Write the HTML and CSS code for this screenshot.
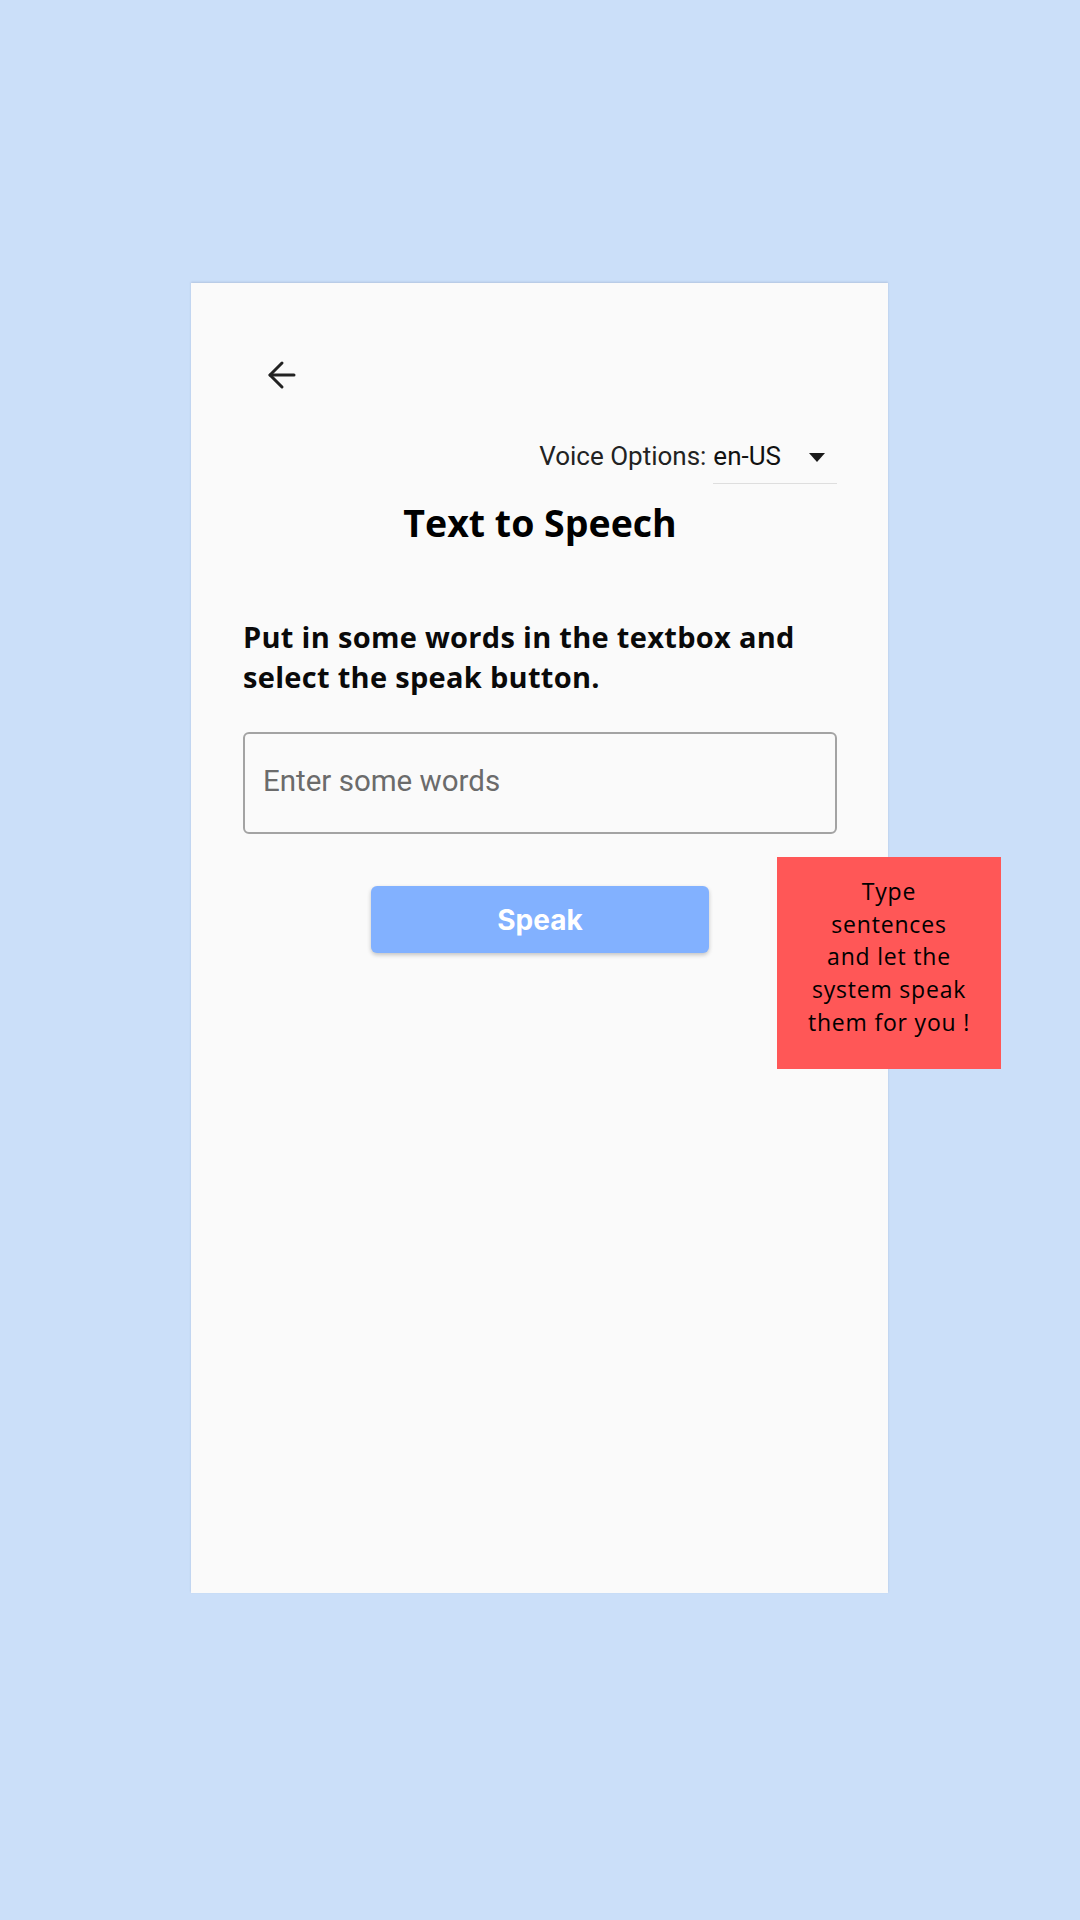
FILE: index.html
```html
<!DOCTYPE html>
<html lang="en">
<head>
<meta charset="utf-8">
<title>Text to Speech</title>
<link rel="stylesheet" href="styles.css">
</head>
<body>
<div class="stage">
  <main class="card">
    <button class="back" aria-label="Back">
      <svg viewBox="0 0 24 24" width="36" height="36" fill="none" stroke="#222" stroke-width="2" stroke-linecap="round" stroke-linejoin="round">
        <line x1="4" y1="12" x2="20" y2="12"/>
        <polyline points="12,4 4,12 12,20"/>
      </svg>
    </button>
    <div class="voice-row">
      <span class="voice-label">Voice Options:</span>
      <div class="dropdown">
        <span class="dropdown-value">en-US</span>
        <svg class="dropdown-icon" viewBox="0 0 40 48" width="40" height="48">
          <polygon points="12,21 28,21 20,30" fill="#1a1a1a"/>
        </svg>
      </div>
    </div>
    <h1 class="title">Text to Speech</h1>
    <p class="instructions">Put in some words in the textbox and select the speak button.</p>
    <div class="input-box">
      <span class="placeholder">Enter some words</span>
    </div>
    <div class="actions">
      <button class="speak">Speak</button>
    </div>
  </main>
  <aside class="note">Type<br>sentences<br>and let the<br>system speak<br>them for you !</aside>
</div>
</body>
</html>
```

FILE: styles.css
```css
html, body {
  margin: 0;
  padding: 0;
}
body {
  background: #cbdff9;
  width: 1080px;
  height: 1920px;
  overflow: hidden;
}
.stage {
  position: relative;
  padding: 283px 0 0 191px;
}
.card {
  box-sizing: border-box;
  width: 697px;
  height: 1310px;
  background: #fafafa;
  padding: 0 51px 0 52px;
  box-shadow: 0 -1px 2px rgba(60, 80, 110, 0.18);
  display: flex;
  flex-direction: column;
}
.back {
  margin: 74px 0 0 21px;
  padding: 0;
  width: 36px;
  height: 36px;
  border: 0;
  background: none;
  display: block;
  align-self: flex-start;
}
.back svg {
  display: block;
}
.voice-row {
  margin-top: 39px;
  display: flex;
  justify-content: flex-end;
  align-items: flex-start;
  font-family: Roboto, "Noto Sans", sans-serif;
  font-size: 26px;
  line-height: 48px;
  color: #222;
}
.voice-label {
  margin-right: 7px;
}
.dropdown {
  display: flex;
  align-items: flex-start;
  padding-bottom: 3px;
  border-bottom: 1px solid #dedede;
  color: #111;
}
.dropdown-value {
  margin-right: 16px;
}
.dropdown-icon {
  display: block;
}
.title {
  margin: 14px 0 0;
  text-align: center;
  font-family: "Open Sans", sans-serif;
  font-weight: 700;
  font-size: 37.5px;
  line-height: 50px;
  color: #000;
}
.instructions {
  margin: 69px 0 0;
  font-family: "Open Sans", sans-serif;
  font-weight: 700;
  font-size: 29px;
  line-height: 40px;
  letter-spacing: 0.3px;
  color: #0a0a0a;
}
.input-box {
  box-sizing: border-box;
  margin-top: 35px;
  height: 102px;
  border: 2px solid #a3a3a3;
  border-radius: 6px;
  display: flex;
  align-items: center;
  padding: 0 0 4px 18px;
}
.placeholder {
  font-family: Roboto, "Noto Sans", sans-serif;
  font-size: 29.5px;
  color: #6b6b6b;
}
.actions {
  margin-top: 52px;
  display: flex;
  justify-content: center;
}
.speak {
  width: 338px;
  height: 67px;
  border: 0;
  border-radius: 6px;
  background: #82b1ff;
  color: #fff;
  font-family: Inter, Roboto, sans-serif;
  font-weight: 700;
  font-size: 28px;
  box-shadow: 0 2px 4px rgba(0, 0, 0, 0.22);
  padding: 0;
}
.note {
  position: absolute;
  left: 777px;
  top: 857px;
  box-sizing: border-box;
  width: 224px;
  height: 212px;
  padding-top: 18px;
  background: #ff5757;
  color: #000;
  text-align: center;
  font-family: "Open Sans", sans-serif;
  font-size: 23px;
  line-height: 32.7px;
  letter-spacing: 0.8px;
}
```
